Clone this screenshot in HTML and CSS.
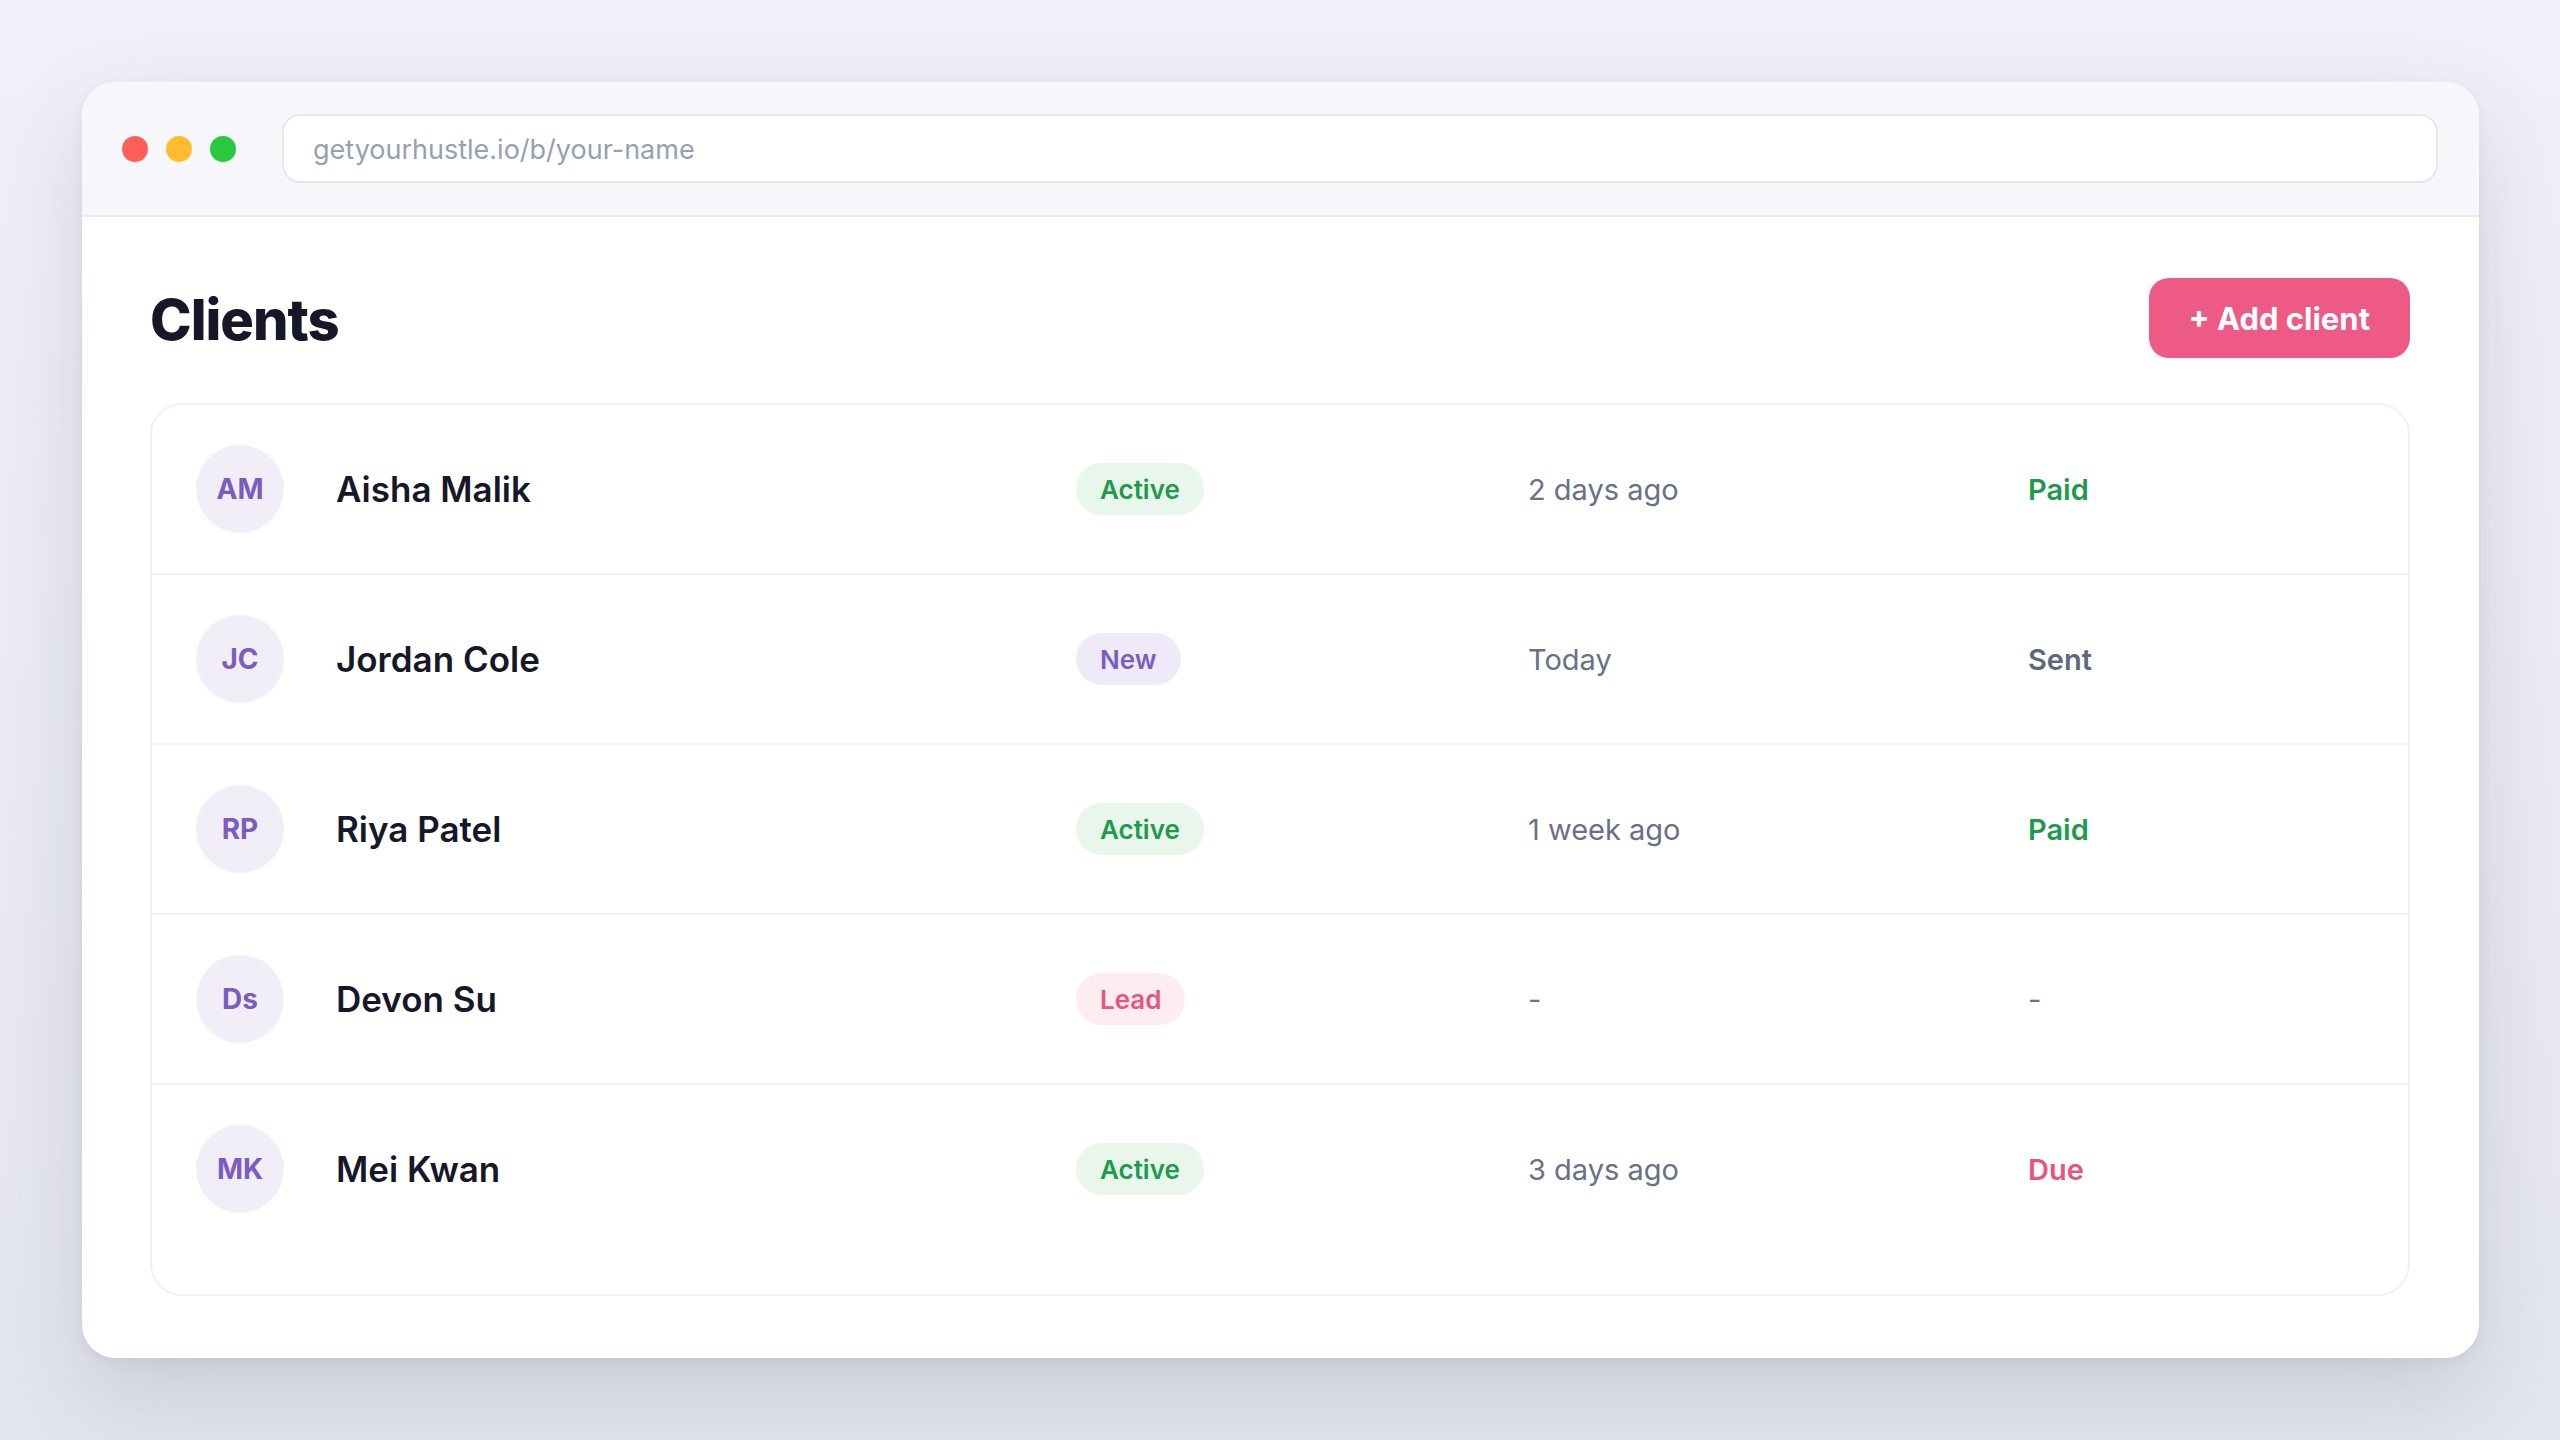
FILE: index.html
```html
<!DOCTYPE html>
<html lang="en">
<head>
    <meta charset="UTF-8">
    <meta name="viewport" content="width=device-width, initial-scale=1.0">
    <title>Clients</title>
    <link rel="stylesheet" href="styles.css">
</head>
<body>

    <div class="window">
        <div class="titlebar">
            <div class="lights">
                <span class="light light-red"></span>
                <span class="light light-yellow"></span>
                <span class="light light-green"></span>
            </div>
            <div class="url-bar">getyourhustle.io/b/your-name</div>
        </div>

        <div class="content">
            <div class="page-header">
                <h1 class="page-title">Clients</h1>
                <button class="add-button">+ Add client</button>
            </div>

            <div class="client-list">
                <div class="client-row">
                    <div class="client-main">
                        <span class="avatar">AM</span>
                        <span class="client-name">Aisha Malik</span>
                    </div>
                    <div><span class="badge badge-active">Active</span></div>
                    <div class="last-seen">2 days ago</div>
                    <div class="invoice invoice-paid">Paid</div>
                </div>
                <div class="client-row">
                    <div class="client-main">
                        <span class="avatar">JC</span>
                        <span class="client-name">Jordan Cole</span>
                    </div>
                    <div><span class="badge badge-new">New</span></div>
                    <div class="last-seen">Today</div>
                    <div class="invoice invoice-sent">Sent</div>
                </div>
                <div class="client-row">
                    <div class="client-main">
                        <span class="avatar">RP</span>
                        <span class="client-name">Riya Patel</span>
                    </div>
                    <div><span class="badge badge-active">Active</span></div>
                    <div class="last-seen">1 week ago</div>
                    <div class="invoice invoice-paid">Paid</div>
                </div>
                <div class="client-row">
                    <div class="client-main">
                        <span class="avatar">Ds</span>
                        <span class="client-name">Devon Su</span>
                    </div>
                    <div><span class="badge badge-lead">Lead</span></div>
                    <div class="last-seen">-</div>
                    <div class="invoice invoice-none">-</div>
                </div>
                <div class="client-row">
                    <div class="client-main">
                        <span class="avatar">MK</span>
                        <span class="client-name">Mei Kwan</span>
                    </div>
                    <div><span class="badge badge-active">Active</span></div>
                    <div class="last-seen">3 days ago</div>
                    <div class="invoice invoice-due">Due</div>
                </div>
            </div>
        </div>
    </div>

</body>
</html>
```

FILE: styles.css
```css
* {
    box-sizing: border-box;
}

body {
    margin: 0;
    padding: 82px 81px 82px 82px;
    min-height: 1440px;
    font-family: Inter, "Noto Sans", sans-serif;
    background: linear-gradient(180deg, #f0f0f9 0%, #e9eaf3 60%, #e4e6ee 100%);
}

.window {
    background: #fff;
    border-radius: 34px;
    overflow: hidden;
    box-shadow: 0 40px 90px rgba(60, 66, 100, 0.16), 0 4px 14px rgba(60, 66, 100, 0.06);
}

/* browser chrome */
.titlebar {
    height: 135px;
    display: flex;
    align-items: center;
    gap: 46px;
    padding: 0 41px 0 40px;
    background: #f6f7fb;
    border-bottom: 2px solid #e9eaf0;
}

.lights {
    display: flex;
    gap: 18px;
}

.light {
    width: 26px;
    height: 26px;
    border-radius: 50%;
}

.light-red { background: #ff5f57; }
.light-yellow { background: #febc2e; }
.light-green { background: #28c840; }

.url-bar {
    flex: 1;
    height: 69px;
    display: flex;
    align-items: center;
    padding: 2px 0 0 29px;
    background: #fff;
    border: 2px solid #e6e8ee;
    border-radius: 18px;
    font-size: 27px;
    color: #97a0b3;
}

/* page */
.content {
    padding: 61px 69px 62px 68px;
}

.page-header {
    display: flex;
    justify-content: space-between;
    align-items: center;
    height: 80px;
    margin-bottom: 45px;
}

.page-title {
    margin: 0;
    padding-top: 3px;
    font-size: 56px;
    font-weight: 800;
    line-height: 1;
    letter-spacing: -1px;
    color: #161829;
}

.add-button {
    height: 80px;
    padding: 0 40px;
    border: none;
    border-radius: 20px;
    background: #ec5a85;
    color: #fff;
    font-family: inherit;
    font-size: 31px;
    font-weight: 700;
}

.client-list {
    border: 2px solid #eef0f4;
    border-radius: 32px;
    padding-bottom: 41px;
}

.client-row {
    display: grid;
    grid-template-columns: 880px 452px 500px 1fr;
    align-items: center;
    height: 170px;
    padding: 0 44px;
    border-bottom: 2px solid #f0f2f5;
}

.client-row:last-child {
    height: 168px;
    border-bottom: none;
}

.client-main {
    display: flex;
    align-items: center;
    gap: 52px;
}

.avatar {
    width: 88px;
    height: 88px;
    border-radius: 50%;
    display: flex;
    align-items: center;
    justify-content: center;
    background: #f1eef8;
    color: #7b5cc0;
    font-size: 28px;
    font-weight: 700;
}

.client-name {
    font-size: 35px;
    font-weight: 600;
    color: #161829;
}

.badge {
    display: inline-flex;
    align-items: center;
    height: 52px;
    padding: 0 24px;
    border-radius: 26px;
    font-size: 26px;
    font-weight: 600;
}

.badge-active { background: #e8f6ec; color: #1d9a4a; }
.badge-new { background: #efeaf8; color: #7b5cc0; }
.badge-lead { background: #fdecf0; color: #e8547e; }

.last-seen {
    font-size: 29px;
    color: #687186;
}

.invoice {
    font-size: 29px;
    font-weight: 600;
}

.invoice-paid { color: #1d9a4a; }
.invoice-sent { color: #5f687b; }
.invoice-none { color: #687186; font-weight: 400; }
.invoice-due { color: #e8547e; }
```
